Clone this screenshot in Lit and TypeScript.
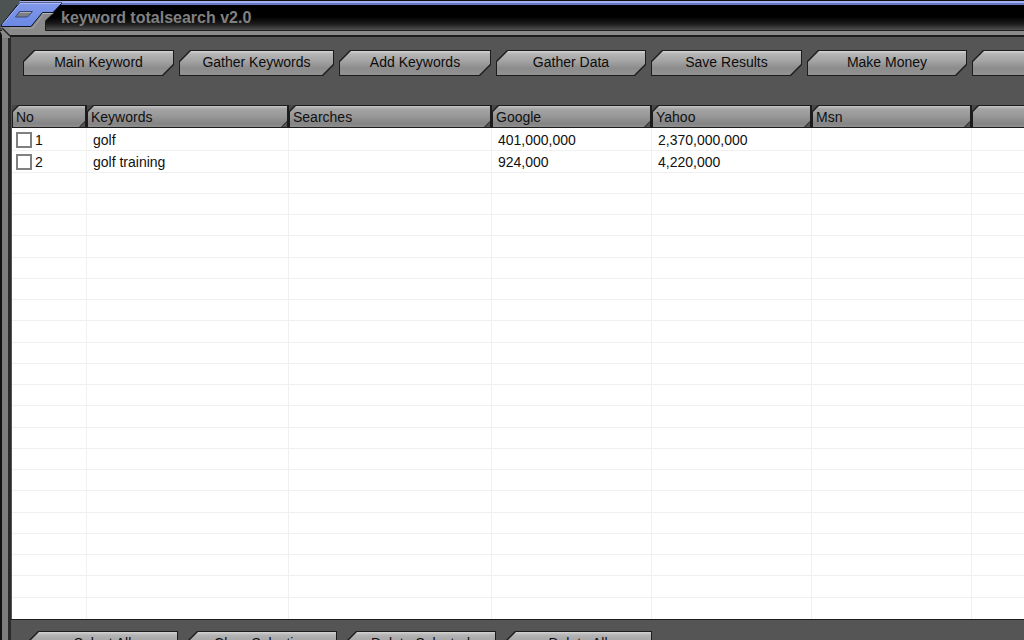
import { LitElement, html, css, svg } from "lit";
import { customElement, property } from "lit/decorators.js";

@customElement("bevel-button")
class BevelButton extends LitElement {
  @property() label = "";

  static styles = css`
    :host {
      display: block;
      flex: none;
      height: 26px;
    }
    button {
      display: block;
      position: relative;
      width: 100%;
      height: 100%;
      border: 0;
      padding: 0 0 2px;
      background: #1c1c1c;
      font: 14px/24px "Liberation Sans", Arial, sans-serif;
      color: #0c0c0c;
      white-space: nowrap;
      clip-path: polygon(11px 0, 100% 0, 100% calc(100% - 11px), calc(100% - 11px) 100%, 0 100%, 0 11px);
    }
    button::before {
      content: "";
      position: absolute;
      inset: 1px;
      background: linear-gradient(#d4d4d4, #b4b4b4 3px, #a4a4a4 10px, #8c8c8c 17px, #929292);
      clip-path: polygon(11px 0, 100% 0, 100% calc(100% - 11px), calc(100% - 11px) 100%, 0 100%, 0 11px);
    }
    span {
      position: relative;
    }
  `;

  render() {
    return html`<button type="button" aria-label=${this.label || "More"}><span>${this.label}</span></button>`;
  }
}

const actions = [
  { label: "Main Keyword", width: 151 },
  { label: "Gather Keywords", width: 155 },
  { label: "Add Keywords", width: 152 },
  { label: "Gather Data", width: 150 },
  { label: "Save Results", width: 151 },
  { label: "Make Money", width: 160 },
  { label: "", width: 151 },
];

const columns = [
  { name: "No", width: 75 },
  { name: "Keywords", width: 202 },
  { name: "Searches", width: 203 },
  { name: "Google", width: 160 },
  { name: "Yahoo", width: 160 },
  { name: "Msn", width: 160 },
  { name: "", width: 0 },
];

const results = [
  ["golf", "", "401,000,000", "2,370,000,000", "", ""],
  ["golf training", "", "924,000", "4,220,000", "", ""],
];

const selectionActions = [
  { label: "Select All", width: 151 },
  { label: "Clear Selection", width: 151 },
  { label: "Delete Selected", width: 151 },
  { label: "Delete All", width: 148 },
];

const blankRows = Array.from({ length: 21 });

const corner = svg`
  <defs>
    <linearGradient id="blue" x1="0" y1="0" x2="0" y2="1">
      <stop offset="0" stop-color="#8299ea" />
      <stop offset="1" stop-color="#6a88e4" />
    </linearGradient>
  </defs>
  <path d="M0 0H21L1 25V28H0Z" fill="#4d5252" />
  <path d="M1 27H31L42 13H54L46 20V31H64V35H10V38H2V30Z" fill="#8a8a8a" />
  <path d="M42 13.5H53" stroke="#b8b8b8" />
  <path d="M53 13.500L45.500 21V30.500H64" fill="none" stroke="#1a1a1a" />
  <path d="M2 28L10 36" fill="none" stroke="#222" stroke-width="1.500" />
  <path d="M10 28H33L43 15" fill="none" stroke="#a6a6a6" />
  <path d="M1.500 25L19.500 3H62L53 12.500H42.500L31 26.500H1.500Z" fill="url(#blue)" stroke="#10152c" />
  <path d="M2.500 24.500L20 3.500H61" fill="none" stroke="#a9b9f8" />
  <path d="M19.500 11.500H32.500L27.500 17H15.500Z" fill="#7c8085" stroke="#3a4878" />
  <path d="M20 12.500H31" stroke="#a8acb2" />
`;

@customElement("app-root")
class AppRoot extends LitElement {
  static styles = css`
    :host {
      display: flex;
      flex-direction: column;
      height: 100vh;
      overflow: hidden;
      background: #555;
      font: 14px/16px "Liberation Sans", Arial, sans-serif;
      color: #111;
    }
    .titlebar {
      position: relative;
      flex: none;
      box-sizing: border-box;
      height: 31px;
      padding: 5px 0 0 61px;
      background: linear-gradient(
        #101010 1px,
        #a2b0ee 1px 3px,
        #6478c8 3px 5px,
        #000 5px 17px,
        #1c1c1c 24px,
        #505050 30px,
        #222 30px
      );
    }
    h1 {
      margin: 0;
      font: bold 16px/26px "Liberation Sans", Arial, sans-serif;
      color: #808080;
    }
    .corner {
      position: absolute;
      left: 0;
      top: 0;
    }
    .frame {
      flex: 1;
      min-height: 0;
      display: flex;
      border-top: 4px solid #8a8a8a;
      border-left: 2px solid #111;
      background: #7c7c7c;
      padding-left: 6px;
    }
    .panel {
      flex: 1;
      min-width: 0;
      display: flex;
      flex-direction: column;
      border-top: 2px solid #1c1c1c;
      border-left: 3px solid #2a2a2a;
      background: #555;
      overflow: hidden;
    }
    .toolbar {
      display: flex;
      flex: none;
      gap: 5px;
      padding: 13px 0 29px 12px;
    }
    .sheet {
      flex: 1;
      min-height: 0;
      margin-left: 1px;
      background: #fff;
      overflow: hidden;
    }
    table {
      width: 100%;
      height: 100%;
      table-layout: fixed;
      border-collapse: separate;
      border-spacing: 0;
    }
    th {
      height: 23px;
      padding: 0;
      background: #484848;
      text-align: left;
      font-weight: normal;
    }
    .head {
      position: relative;
      box-sizing: border-box;
      height: 23px;
      padding: 4px;
      background: #1c1c1c;
      clip-path: polygon(6px 0, 100% 0, 100% 100%, 0 100%, 0 6px);
    }
    th:last-child .head {
      margin-right: -12px;
    }
    .head::before {
      content: "";
      position: absolute;
      inset: 1px 2px 1px 1px;
      background: linear-gradient(#c4c4c4, #a4a4a4 3px, #989898 10px, #848484 18px, #909090);
      clip-path: polygon(6px 0, 100% 0, 100% calc(100% - 6px), calc(100% - 6px) 100%, 0 100%, 0 6px);
    }
    .head::after {
      content: "";
      position: absolute;
      right: 2px;
      bottom: 1px;
      width: 5px;
      height: 5px;
      background: #555;
      clip-path: polygon(100% 0, 100% 100%, 0 100%);
    }
    .head span {
      position: relative;
    }
    tbody tr {
      height: 20px;
    }
    tbody tr:first-child {
      height: 22px;
    }
    tbody tr:first-child td {
      padding-top: 2px;
    }
    td {
      padding: 0 6px;
      border-bottom: 1px solid #f0f0f0;
      border-right: 1px solid #f0f0f0;
      line-height: 16px;
    }
    tr:last-child td {
      border-bottom: 0;
    }
    td:first-child {
      padding: 0 4px;
    }
    td:last-child {
      border-right: 0;
    }
    label {
      display: flex;
      align-items: center;
      gap: 3px;
    }
    input {
      appearance: none;
      box-sizing: border-box;
      width: 16px;
      height: 16px;
      margin: 0;
      border: 2px solid #808080;
      background: #fff;
    }
    .footer {
      flex: none;
      display: flex;
      gap: 8px;
      box-sizing: border-box;
      height: 21px;
      padding: 11px 0 0 16px;
      border-top: 1px solid #1c1c1c;
      overflow: hidden;
    }
  `;

  render() {
    return html`
      <header class="titlebar">
        <svg class="corner" width="64" height="38" viewBox="0 0 64 38" aria-hidden="true">${corner}</svg>
        <h1>keyword totalsearch v2.0</h1>
      </header>
      <main class="frame">
        <div class="panel">
          <nav class="toolbar">
            ${actions.map((a) => html`<bevel-button .label=${a.label} style="width:${a.width}px"></bevel-button>`)}
          </nav>
          <div class="sheet">
            <table>
              <colgroup>
                ${columns.map((c) => html`<col style="width:${c.width ? `${c.width}px` : "auto"}" />`)}
              </colgroup>
              <thead>
                <tr>
                  ${columns.map((c) => html`<th scope="col"><div class="head"><span>${c.name}</span></div></th>`)}
                </tr>
              </thead>
              <tbody>
                ${results.map(
                  (cells, i) => html`<tr>
                    <td><label><input type="checkbox" />${i + 1}</label></td>
                    ${cells.map((c) => html`<td>${c}</td>`)}
                  </tr>`
                )}
                ${blankRows.map(() => html`<tr>${columns.map(() => html`<td></td>`)}</tr>`)}
              </tbody>
            </table>
          </div>
          <div class="footer">
            ${selectionActions.map((a) => html`<bevel-button .label=${a.label} style="width:${a.width}px"></bevel-button>`)}
          </div>
        </div>
      </main>
    `;
  }
}
